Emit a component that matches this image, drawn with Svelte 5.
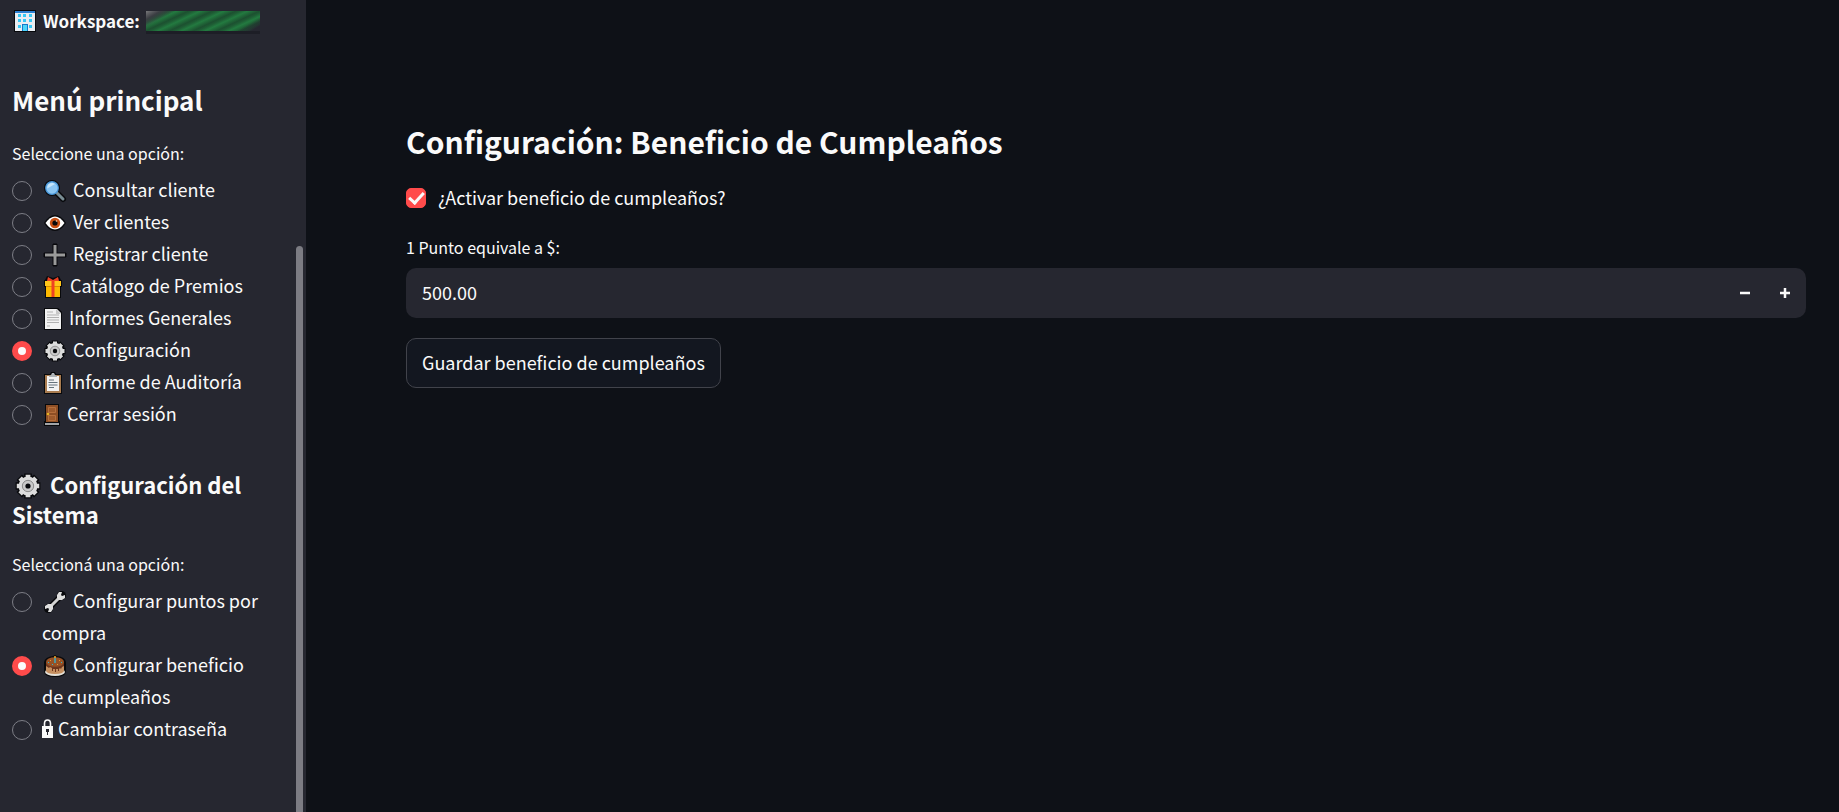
<script lang="ts">
  const menuItems = [
    { id: 'consultar', icon: 'search', width: 22, text: 'Consultar cliente' },
    { id: 'ver', icon: 'eye', width: 22, text: 'Ver clientes' },
    { id: 'registrar', icon: 'plus', width: 22, text: 'Registrar cliente' },
    { id: 'premios', icon: 'gift', width: 19, text: 'Catálogo de Premios' },
    { id: 'informes', icon: 'page', width: 18, text: 'Informes Generales' },
    { id: 'config', icon: 'gear', width: 22, text: 'Configuración' },
    { id: 'auditoria', icon: 'clipboard', width: 18, text: 'Informe de Auditoría' },
    { id: 'salir', icon: 'door', width: 16, text: 'Cerrar sesión' },
  ];

  const configItems = [
    { id: 'puntos', icon: 'wrench', width: 22, text: 'Configurar puntos por compra' },
    { id: 'cumple', icon: 'cake', width: 22, text: 'Configurar beneficio de cumpleaños' },
    { id: 'clave', icon: 'lock', width: 11, text: 'Cambiar contraseña' },
  ];

  let menu = $state('config');
  let option = $state('cumple');
  let active = $state(true);
  let points = $state('500.00');

  function step(delta: number) {
    points = Math.max(0, Number(points) + delta).toFixed(2);
  }
</script>

{#snippet icon(name: string, width: number)}
  <svg class="icon {name}" {width} height="22" viewBox="0 0 {width} 22" aria-hidden="true">
    {#if name === 'building'}
      <rect width="22" height="22" fill="#08090c" />
      <rect x="1" y="1" width="20" height="20" fill="#e9edf2" />
      <rect x="1" y="1" width="20" height="2" fill="#2b7fd0" />
      <path d="M4 4h3v3H4zM9 4h3v3H9zM15 4h3v3h-3zM4 9h3v3H4zM9 9h3v3H9zM15 9h3v3h-3zM4 15h3v3H4zM15 15h3v3h-3z" fill="#35c8f5" />
      <path d="M8 14h6v7H8z" fill="#1678c8" />
      <path d="M9 15h4v6H9z" fill="#4bd5fa" />
    {:else if name === 'search'}
      <path d="M13 13l6 6" stroke="#08090c" stroke-width="6" stroke-linecap="round" />
      <circle cx="8" cy="8" r="8" fill="#08090c" />
      <path d="M13 13l6 6" stroke="#788c93" stroke-width="3" stroke-linecap="round" />
      <circle cx="8" cy="8" r="6.300" fill="#8ac5f2" stroke="#4795d8" stroke-width="1.200" />
      <path d="M3.200 8.500A5 5 0 0 1 9 3l2 1z" fill="#c6e5fa" />
    {:else if name === 'eye'}
      <path d="M0 11Q5 3 11 3t11 8q-5 8-11 8T0 11z" fill="#08090c" />
      <path d="M1.500 11Q6 4.500 11 4.500t9.500 6.500q-4.500 6.500-9.500 6.500t-9.500-6.500z" fill="#fff" />
      <circle cx="11" cy="11" r="5.200" fill="#c94f13" />
      <circle cx="11" cy="11" r="2.600" fill="#08090c" />
      <circle cx="12.500" cy="9" r=".8" fill="#ffd5b5" />
    {:else if name === 'plus'}
      <path d="M9 0h4v9h9v4h-9v9H9v-9H0V9h9z" fill="#08090c" stroke="#08090c" />
      <path d="M9.500 1h3v8.500H21v3h-8.500V21h-3v-8.500H1v-3h8.500z" fill="#9a9a9a" />
    {:else if name === 'gift'}
      <path d="M3 0l6 2 6-2 2 4h1v7h-1v11H1V11H0V4h1z" fill="#08090c" />
      <path d="M2 10h14v11H2z" fill="#fdb900" />
      <path d="M1 5h16v5H1z" fill="#ffc51a" />
      <path d="M2 10h14v1H2z" fill="#d98b00" />
      <path d="M3 5l1-4 5 3 5-3 1 4zM7.500 5h3v16h-3z" fill="#ef4123" />
    {:else if name === 'page'}
      <path d="M0 0h14l4 4v18H0z" fill="#08090c" />
      <path d="M1 1h12l4 4v16H1z" fill="#f2f2f2" />
      <path d="M12 1l5 5h-5z" fill="#c8c8c8" />
      <path d="M3 4h6M3 7h12M3 9.500h12M3 12h12M3 14.500h12M3 18h3" stroke="#b1b1b1" />
    {:else if name === 'gear'}
      <path d="M11 .5v21M.5 11h21M3.600 3.600l14.800 14.800M18.400 3.600L3.600 18.400" stroke="#08090c" stroke-width="6.500" />
      <circle cx="11" cy="11" r="9.300" fill="#08090c" />
      <path d="M11 1.500v19M1.500 11h19M4.300 4.300l13.400 13.400M17.700 4.300L4.300 17.700" stroke="#dcdcdc" stroke-width="4" />
      <circle cx="11" cy="11" r="8" fill="#dcdcdc" />
      <circle cx="11" cy="11" r="4.800" fill="#c9c9c9" stroke="#858585" stroke-width=".8" />
      <circle cx="11" cy="11" r="2.200" fill="#08090c" />
    {:else if name === 'clipboard'}
      <path d="M0 2h6l1-2h4l1 2h6v20H0z" fill="#08090c" />
      <path d="M1 3h16v18H1z" fill="#a97c50" />
      <path d="M3 4h12v15H3z" fill="#f3f3f3" />
      <path d="M5 4l2-1 1-2h2l1 2 2 1v1H5z" fill="#aeb4b8" />
      <path d="M5 8h5M4.500 10.500h9M4.500 13h9M5 15.500h5" stroke="#66737c" />
    {:else if name === 'door'}
      <path d="M1 0h14v17h1v5H0v-5h1z" fill="#08090c" />
      <path d="M2 1h12v17H2z" fill="#8e4f25" />
      <path d="M4.500 3.500h7v5h-7zM4.500 11.500h7v5h-7z" fill="#9d5a2c" stroke="#b66f3c" />
      <path d="M1 19h14v2H1z" fill="#a2a5a8" />
      <circle cx="4" cy="10" r="1.300" fill="#e4b321" />
    {:else if name === 'wrench'}
      <path d="M4 18L18 4" stroke="#08090c" stroke-width="6" />
      <circle cx="4.500" cy="17.500" r="4.500" fill="#08090c" />
      <circle cx="17.500" cy="4.500" r="4.500" fill="#08090c" />
      <path d="M5 17L17 5" stroke="#d2d2d2" stroke-width="3" />
      <path d="M1 15l3-2h3l2 2v3l-2 3H4l1-3-1-1-3 1zM13 4l2-3h3l-1 3 1 1 3-1v3l-3 2h-3l-2-2z" fill="#dedede" />
    {:else if name === 'cake'}
      <path d="M9 1l2-1 2 1q8 1 9 6v9q0 6-11 6T0 16V7q1-5 9-6z" fill="#08090c" />
      <ellipse cx="11" cy="17" rx="10" ry="4" fill="#e4e1da" />
      <path d="M2 7h18v9q-1 3-9 3t-9-3z" fill="#c58f60" />
      <path d="M2 7h18v4l-2 1-1 2-1-1-1 1v2h-1v-2h-2v3h-1v-3H9v2H8v-3l-2-1-1 1-3-2z" fill="#6e361d" />
      <ellipse cx="11" cy="7" rx="9" ry="4.800" fill="#985225" />
      <path d="M10.300 3h1.400v5h-1.400z" fill="#32b5cf" />
      <path d="M10.300 1h1.400v2h-1.400z" fill="#ffb52e" />
      <path d="M6 5h1v1H6zM15 5h1v1h-1zM13 9h1v1h-1z" fill="#e89a32" />
      <path d="M4 7h1v1H4zM8 9h1v1H8zM17 7h1v1h-1z" fill="#32b5cf" />
    {:else if name === 'lock'}
      <path d="M2.500 10V5.500a3 3.500 0 0 1 6 0V10" fill="none" stroke="#fafafa" stroke-width="1.600" />
      <rect y="8" width="11" height="12" fill="#fafafa" />
      <path d="M4 11h3v3H6v3H5v-3H4z" fill="#262730" />
    {/if}
  </svg>
{/snippet}

<div class="app">
  <aside class="sidebar">
    <p class="workspace">{@render icon('building', 22)}<strong>Workspace:</strong><span class="brand"></span></p>

    <h2>Menú principal</h2>
    <fieldset>
      <legend>Seleccione una opción:</legend>
      {#each menuItems as item (item.id)}
        <label class="option">
          <input type="radio" name="menu" value={item.id} bind:group={menu} />
          <span>{@render icon(item.icon, item.width)}{item.text}</span>
        </label>
      {/each}
    </fieldset>

    <h3>{@render icon('gear', 22)}Configuración del Sistema</h3>
    <fieldset>
      <legend>Seleccioná una opción:</legend>
      {#each configItems as item (item.id)}
        <label class="option">
          <input type="radio" name="config" value={item.id} bind:group={option} />
          <span>{@render icon(item.icon, item.width)}{item.text}</span>
        </label>
      {/each}
    </fieldset>
    <div class="scrollbar"></div>
  </aside>

  <main>
    <h1>Configuración: Beneficio de Cumpleaños</h1>

    <label class="check">
      <input type="checkbox" bind:checked={active} />
      <span>¿Activar beneficio de cumpleaños?</span>
    </label>

    <label class="field-label" for="points">1 Punto equivale a $:</label>
    <div class="number">
      <input id="points" type="text" inputmode="decimal" bind:value={points} />
      <button type="button" aria-label="Restar" onclick={() => step(-1)}>
        <svg width="10" height="10" viewBox="0 0 10 10"><path d="M0 5h10" stroke="currentColor" stroke-width="2.500" /></svg>
      </button>
      <button type="button" aria-label="Sumar" onclick={() => step(1)}>
        <svg width="10" height="10" viewBox="0 0 10 10"><path d="M0 5h10M5 0v10" stroke="currentColor" stroke-width="2.500" /></svg>
      </button>
    </div>

    <button type="button" class="save">Guardar beneficio de cumpleaños</button>
  </main>
</div>

<style>
  :global(body) {
    margin: 0;
    background: #0e1117;
  }

  .app {
    display: flex;
    min-height: 100vh;
    color: #fafafa;
    font-family: "Noto Sans CJK SC", "Noto Sans", sans-serif;
    font-size: 18px;
    line-height: 32px;
  }

  .app * {
    box-sizing: border-box;
  }

  .sidebar {
    position: relative;
    flex: 0 0 306px;
    padding: 5px 40px 24px 12px;
    background: #262730;
  }

  .icon {
    display: inline-block;
    margin: 0 7px 0 2px;
    vertical-align: -5px;
    overflow: visible;
  }

  .icon.lock {
    margin: 0 5px 0 0;
    vertical-align: -4px;
  }

  .workspace {
    display: flex;
    align-items: center;
    margin: 0;
    font-size: 17px;
  }

  .brand {
    width: 114px;
    height: 20px;
    margin-left: 6px;
    background:
      linear-gradient(150deg, #77777a 0, #3a3d42 10%, transparent 20%, transparent 84%, #262730 94%),
      repeating-linear-gradient(155deg, #1e5c34, #237a40 3px, #206a39 5px, #1c5030 8px, #1e5c34 10px);
    box-shadow: 0 3px 0 #1d1e26;
  }

  h1, h2, h3 {
    margin: 0;
    font-weight: 700;
  }

  h2 {
    margin-top: 45px;
    font-size: 26px;
    line-height: 36px;
  }

  h3 {
    margin-top: 40px;
    font-size: 22px;
    line-height: 30px;
  }

  h3 .icon {
    width: 26px;
    height: 26px;
    margin: 0 9px 0 3px;
  }

  fieldset {
    margin: 21px 0 0;
    padding: 0;
    border: 0;
    min-width: 0;
  }

  legend, .field-label {
    display: block;
    padding: 0;
    font-size: 16px;
    line-height: 28px;
  }

  legend {
    margin-bottom: 6px;
  }

  .option {
    display: flex;
    gap: 10px;
  }

  .option input {
    appearance: none;
    flex: none;
    width: 20px;
    height: 20px;
    margin: 8px 0 0;
    border: 1px solid #7d7e86;
    border-radius: 50%;
  }

  .option input:checked {
    border: 6px solid #ff4b4b;
    background: #fafafa;
  }

  .scrollbar {
    position: absolute;
    top: 246px;
    right: 3px;
    bottom: 0;
    width: 7px;
    border-radius: 4px 4px 0 0;
    background: #7c7c83;
  }

  main {
    flex: 1;
    min-width: 0;
    padding: 119px 33px 24px 100px;
  }

  h1 {
    font-size: 30px;
    line-height: 44px;
  }

  .check {
    display: flex;
    align-items: center;
    gap: 12px;
    margin-top: 18px;
  }

  .check input {
    appearance: none;
    display: grid;
    place-items: center;
    width: 20px;
    height: 20px;
    margin: 2px 0 0;
    border: 1px solid #7d7e86;
    border-radius: 5px;
  }

  .check input:checked {
    border-color: #ff4b4b;
    background: #ff4b4b;
  }

  .check input:checked::after {
    content: "";
    width: 6px;
    height: 12px;
    margin-bottom: 4px;
    border: solid #fafafa;
    border-width: 0 3px 3px 0;
    transform: rotate(42deg);
  }

  .field-label {
    margin-top: 20px;
  }

  .number {
    display: flex;
    height: 50px;
    margin-top: 7px;
    padding-right: 1px;
    overflow: hidden;
    border-radius: 10px;
    background: #262730;
  }

  .number input {
    flex: 1;
    min-width: 0;
    padding: 0 16px 2px;
    border: 0;
    outline: 0;
    background: transparent;
    color: inherit;
    font: inherit;
  }

  .number button {
    display: grid;
    place-items: center;
    width: 40px;
    padding: 0;
    border: 0;
    background: transparent;
    color: #fafafa;
  }

  .save {
    height: 50px;
    margin-top: 20px;
    padding: 0 15px 2px;
    border: 1px solid #41434b;
    border-radius: 10px;
    background: #131720;
    color: inherit;
    font: inherit;
  }
</style>
